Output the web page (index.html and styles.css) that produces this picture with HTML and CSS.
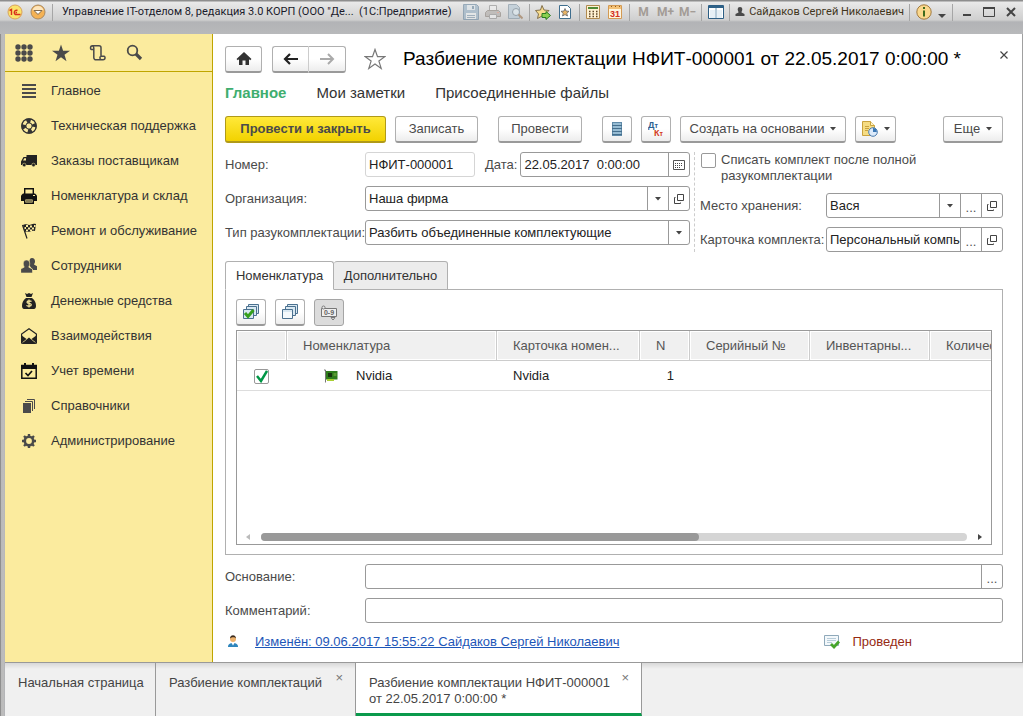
FILE: index.html
```html
<!DOCTYPE html>
<html lang="ru">
<head>
    <meta charset="UTF-8">
    <meta name="viewport" content="width=device-width, initial-scale=1.0">
    <title>Разбиение комплектации</title>
    <link rel="stylesheet" href="styles.css">
</head>
<body>
    <!-- shared icons -->
    <svg class="defs" width="0" height="0" aria-hidden="true">
        <symbol id="open" viewBox="0 0 12 12">
            <path d="M4.500 1.500h6v6h-6zM2.500 4.500h-1v6h6v-1" fill="none" stroke="#444"/>
        </symbol>
        <symbol id="arrow" viewBox="0 0 6 4"><path d="M0 0h6L3 3.500z" fill="#444"/></symbol>
    </svg>

    <header class="titlebar">
        <button class="tool" aria-label="Меню 1С">
            <svg width="16" height="16" viewBox="0 0 16 16"><circle cx="8" cy="8" r="7" fill="#fbe36a" stroke="#d9a35c"/><path d="M2.500 6.500l2-1v5.500M10.500 6.500a2.200 2.200 0 1 0-2 4h5M10 8.500H8.500" fill="none" stroke="#d8301c" stroke-width="1.400"/></svg>
        </button>
        <button class="tool" aria-label="Главное меню">
            <svg width="16" height="16" viewBox="0 0 16 16"><circle cx="8" cy="8" r="7" fill="#f5b254" stroke="#a98a62"/><path d="M2.500 6.500a5.600 5.600 0 0 1 11 0z" fill="#fde6bd"/><path d="M4 6.500h8L8 10.500z" fill="#fff" stroke="#80694c"/></svg>
        </button>
        <span class="sep"></span>
        <span class="title">Управление IT-отделом 8, редакция 3.0 КОРП (ООО "Де...&nbsp; (1С:Предприятие)</span>
        <div class="tools">
            <button class="tool faded" aria-label="Сохранить">
                <svg width="16" height="16" viewBox="0 0 16 16"><path d="M.5.5h13l2 2v13H.5z" fill="#9db4c6" stroke="#7791a6"/><path d="M4 1h8v5H4z" fill="#dde5ea"/><path d="M9 2h2v3H9z" fill="#7791a6"/><path d="M3 9h10v6H3z" fill="#e8eced"/><path d="M4 11.500h8M4 13.500h8" stroke="#8aa0b2"/></svg>
            </button>
            <button class="tool faded" aria-label="Печать">
                <svg width="16" height="16" viewBox="0 0 16 16"><path d="M4.500 1.500h7v5h-7z" fill="#eee" stroke="#999"/><path d="M2.500 6.500h11l2 2v4H.5v-4z" fill="#b6b2ae" stroke="#948d86"/><path d="M4.500 10.500h7v4h-7z" fill="#eee" stroke="#999"/><path d="M12 8h2v1h-2z" fill="#d98"/></svg>
            </button>
            <button class="tool faded" aria-label="Предварительный просмотр">
                <svg width="16" height="16" viewBox="0 0 16 16"><path d="M1.500.5h8l3 3v11h-11z" fill="#b9cad6" stroke="#8a9ba8"/><circle cx="9" cy="8" r="3.500" fill="#dce8ee" stroke="#7a8a96"/><path d="M11.500 10.500l4 4" stroke="#a3805e" stroke-width="2"/></svg>
            </button>
            <span class="sep"></span>
            <button class="tool" aria-label="Добавить в избранное">
                <svg width="16" height="16" viewBox="0 0 16 16"><path d="M7 1.500l2 4.500 5 .5-3.500 3.500 1 4.500L7 12l-4.500 2.500 1-4.500L.5 6.500 5.500 6z" fill="#f8dc8e" stroke="#84714a"/><path d="M7 9.500h4v-2l4.500 4-4.500 4v-2H7z" fill="#8bd04f" stroke="#2b7d22"/></svg>
            </button>
            <button class="tool" aria-label="Избранное">
                <svg width="16" height="16" viewBox="0 0 16 16"><path d="M2.500 1.500h8l3 3v10h-11z" fill="#fff" stroke="#3f6e8e"/><path d="M8 4.500l1 2.500 3 .3-2.200 2 .7 2.700L8 10.600 5.500 12l.7-2.700-2.200-2L7 7z" fill="#e9b465" stroke="#4f5865" stroke-width=".7"/></svg>
            </button>
            <span class="sep"></span>
            <button class="tool" aria-label="Калькулятор">
                <svg width="16" height="16" viewBox="0 0 16 16"><path d="M1.500 1.500h13v13h-13z" fill="#fff1d2" stroke="#b08a50"/><path d="M3 3h10v2H3z" fill="#4f8a35"/><path d="M4 7.500h9M4 10h9M4 12.500h9" stroke="#5d4526" stroke-width="1.400" stroke-dasharray="1.500 2"/></svg>
            </button>
            <button class="tool" aria-label="Календарь">
                <svg width="16" height="16" viewBox="0 0 16 16"><path d="M1.500 1.500h13v13h-13z" fill="#fff6df" stroke="#d39a54"/><path d="M2 2h12v3H2z" fill="#f4c277"/><path d="M4 2.500h1M8 2.500h1M12 2.500h1" stroke="#8c5a20"/><text x="8" y="13" class="cal-num">31</text></svg>
            </button>
            <span class="sep"></span>
            <button class="tool mem">M</button>
            <button class="tool mem">M+</button>
            <button class="tool mem">M−</button>
            <span class="sep"></span>
            <button class="tool" aria-label="Панели">
                <svg width="16" height="16" viewBox="0 0 16 16"><path d="M.5 1.500h15v13H.5z" fill="#fff" stroke="#2d5f85"/><path d="M1 2h14v2H1z" fill="#2f6288"/><path d="M8 4v10" stroke="#6d96b2"/><path d="M2 6h5v8H2zM9 6h5v8H9z" fill="#e6f0f6"/></svg>
            </button>
            <span class="sep"></span>
            <span class="user">
                <svg width="10" height="10" viewBox="0 0 10 10"><path d="M5 0a2.300 2.300 0 0 1 2.300 2.500c0 1.200-.8 1.800-.8 3l3 1.500V9H.5V7l3-1.500c0-1.200-.8-1.800-.8-3A2.300 2.300 0 0 1 5 0z" fill="#4a4a4a"/></svg>
                Сайдаков Сергей Николаевич
            </span>
            <span class="sep"></span>
            <button class="tool" aria-label="Справка">
                <svg width="16" height="16" viewBox="0 0 16 16"><circle cx="8" cy="8" r="7.200" fill="#fbd88c" stroke="#a27a3e"/><path d="M7 3h2v2H7zM7 6.500h2v6H7z" fill="#3f6b1d"/></svg>
            </button>
            <button class="tool narrow" aria-label="Сервис"><svg width="10" height="16" viewBox="0 0 10 16"><path d="M1 10h8l-4 4z" fill="#444"/></svg></button>
            <span class="sep"></span>
            <button class="tool" aria-label="Свернуть"><svg width="12" height="12" viewBox="0 0 12 12"><path d="M2 8h8v2H2z" fill="#444"/></svg></button>
            <button class="tool" aria-label="Развернуть"><svg width="12" height="12" viewBox="0 0 12 12"><path d="M.5 1.500h11v9H.5z" fill="none" stroke="#444"/><path d="M0 1h12v2H0z" fill="#444"/></svg></button>
            <button class="tool" aria-label="Закрыть окно"><svg width="12" height="12" viewBox="0 0 12 12"><path d="M2 2l8 8M10 2l-8 8" stroke="#444" stroke-width="2"/></svg></button>
        </div>
    </header>

    <div class="workspace">
        <aside class="sidebar">
            <div class="side-tools">
                <button aria-label="Разделы"><svg width="18" height="18" viewBox="0 0 18 18"><g fill="#4a4a4a"><circle cx="3" cy="3" r="2.700"/><circle cx="9" cy="3" r="2.700"/><circle cx="15" cy="3" r="2.700"/><circle cx="3" cy="9" r="2.700"/><circle cx="9" cy="9" r="2.700"/><circle cx="15" cy="9" r="2.700"/><circle cx="3" cy="15" r="2.700"/><circle cx="9" cy="15" r="2.700"/><circle cx="15" cy="15" r="2.700"/></g></svg></button>
                <button aria-label="Избранное"><svg width="18" height="18" viewBox="0 0 18 18"><path d="M9 .5l2.100 6.200H18l-5.500 4 2 6.500L9 13.300l-5.500 3.900 2-6.500L0 6.700h6.900z" fill="#4a4a4a"/></svg></button>
                <button aria-label="История"><svg width="18" height="18" viewBox="0 0 18 18"><path d="M4.500 5.500h-2a1.500 1.500 0 0 1-1-1.500c0-1.500 1-2.200 2-2.200h6.500a2 2 0 0 1 2 2v8.500h3a1.200 1.200 0 0 1 1 1.500c0 1.500-.7 2-2 2H7a2.200 2.200 0 0 1-2.200-2.200V4c0-1.200-.5-2-1.500-2.200M12 12.500c-1.500 0-1.500 2.500 0 3" fill="none" stroke="#4a4a4a" stroke-width="1.500"/></svg></button>
                <button aria-label="Поиск"><svg width="18" height="18" viewBox="0 0 18 18"><circle cx="6.500" cy="6.500" r="4.800" fill="none" stroke="#4a4a4a" stroke-width="1.800"/><path d="M10 10l5 5" stroke="#4a4a4a" stroke-width="3.200"/></svg></button>
            </div>
            <nav class="sections">
                <a href="#"><svg width="16" height="16" viewBox="0 0 16 16"><path d="M1 2h14M1 6h14M1 10h14M1 14h14" stroke="#4a4a4a" stroke-width="2"/></svg>Главное</a>
                <a href="#"><svg width="16" height="16" viewBox="0 0 16 16"><circle cx="8" cy="8" r="7.800" fill="#333"/><circle cx="8" cy="8" r="5" fill="none" stroke="#fbeb9e" stroke-width="4" stroke-dasharray="3.900 3.950" stroke-dashoffset="-1"/><circle cx="8" cy="8" r="3" fill="#fbeb9e"/><circle cx="8" cy="8" r="7.200" fill="none" stroke="#333" stroke-width="1.200"/><circle cx="8" cy="8" r="3.200" fill="none" stroke="#333"/></svg>Техническая поддержка</a>
                <a href="#"><svg width="16" height="16" viewBox="0 0 16 16"><path d="M5.500 4V2H16v10H0V8.500L2.500 4z" fill="#222"/><path d="M2 7.500l1.300-2.300H5v2.300z" fill="#fbeb9e"/><circle cx="3.200" cy="12" r="1.800" fill="#222" stroke="#fbeb9e" stroke-width=".5"/><circle cx="12.500" cy="12" r="1.800" fill="#222" stroke="#fbeb9e" stroke-width=".5"/></svg>Заказы поставщикам</a>
                <a href="#"><svg width="16" height="16" viewBox="0 0 16 16"><path d="M3.700 6V.7h8.600V6" fill="none" stroke="#111" stroke-width="1.400"/><path d="M2 5.500h12l2 2V13H0V7.500z" fill="#111"/><path d="M3.700 10.700h8.600v4.600H3.700z" fill="#fbeb9e" stroke="#111" stroke-width="1.400"/><path d="M5 13h6" stroke="#111"/><path d="M12 7.500h2" stroke="#fbeb9e"/></svg>Номенклатура и склад</a>
                <a href="#"><svg width="16" height="16" viewBox="0 0 16 16"><path d="M1.500 2l4.500 13.500" stroke="#222" stroke-width="1.200"/><path d="M2 2c3-2 5 1 8-.5 2-1 3-1 5-.5l-1 7c-2-.5-3-.5-5 .5-2 .8-3-.5-5 .5z" fill="#222"/><path d="M5 2h2v2H5zM9 2.500h2v2H9zM13 2h1.500v2H13zM7 4.500h2v2H7zM3.500 4h1.500v2H3.500zM11 4.500h2v2h-2zM5 6.500h2v1.500H5zM9 6.500h2V8H9z" fill="#fbeb9e"/></svg>Ремонт и обслуживание</a>
                <a href="#"><svg width="16" height="16" viewBox="0 0 16 16"><path d="M11 0c2 0 3 1.500 3 3.500 0 1.500-.7 2-1 3l3 1.800V12h-4L8 7c1-2-.5-7 3-7z" fill="#4a4a4a"/><path d="M5.500 2c2.300 0 3.200 1.500 3.200 3.500S8 8 7.800 9.200L11.500 11v4H-.3v-4l3.500-1.800C3 8 2.300 7.500 2.300 5.500S3.200 2 5.500 2z" fill="#4a4a4a" stroke="#fbeb9e" stroke-width=".6"/></svg>Сотрудники</a>
                <a href="#"><svg width="16" height="16" viewBox="0 0 16 16"><path d="M4 0l2 1 2-1 2 1 2-1-1.500 4h-5zM5 5h6c3 2 4 5 4 8 0 2-1 3-2 3H3c-1 0-2-1-2-3 0-3 1-6 4-8z" fill="#222"/><path d="M10.500 8.500c-1-1-4.500-1-4.500.7s4.300.8 4.300 2.500-3.500 2-4.800.7M8 6.500v8" fill="none" stroke="#fbeb9e" stroke-width="1.200"/></svg>Денежные средства</a>
                <a href="#"><svg width="16" height="16" viewBox="0 0 16 16"><path d="M.6 15V6L8 .8 15.400 6v9z" fill="#fbeb9e" stroke="#222" stroke-width="1.200"/><path d="M0 7l5.500 4L0 15.500zM16 7l-5.500 4 5.500 4.500zM.5 16L8 9.500l7.500 6.500z" fill="#222"/></svg>Взаимодействия</a>
                <a href="#"><svg width="16" height="16" viewBox="0 0 16 16"><path d="M.8 2.500h14.400v12.700H.8z" fill="none" stroke="#111" stroke-width="1.500"/><path d="M0 2h3V0h2v2h6V0h2v2h3v4H0z" fill="#111"/><path d="M4.500 10l2.500 2.500L11 8" fill="none" stroke="#111" stroke-width="1.700"/></svg>Учет времени</a>
                <a href="#"><svg width="16" height="16" viewBox="0 0 16 16"><path d="M2 5h8v10H2z" fill="#4a4a4a"/><path d="M4 3.500h7.500V13M6 1.500h7.500V11" fill="none" stroke="#4a4a4a"/></svg>Справочники</a>
                <a href="#"><svg width="16" height="16" viewBox="0 0 16 16"><circle cx="8" cy="8" r="4.200" fill="none" stroke="#4a4a4a" stroke-width="2.600"/><path d="M8 1v2.500M8 12.500V15M1 8h2.500M12.500 8H15M3 3l2 2M11 11l2 2M13 3l-2 2M5 11l-2 2" stroke="#4a4a4a" stroke-width="2.400"/></svg>Администрирование</a>
            </nav>
        </aside>

        <main class="form">
            <div class="heading">
                <button class="btn home" aria-label="Начальная страница"><svg width="16" height="14" viewBox="0 0 16 14"><path d="M8 0l7.500 7-1.300 1.300L13 7.200V13H9.500V8.500h-3V13H3V7.200L1.800 8.300.5 7z" fill="#333"/></svg></button>
                <div class="history">
                    <button class="btn" aria-label="Назад"><svg width="16" height="12" viewBox="0 0 16 12"><path d="M15 6H3M7 1L2 6l5 5" fill="none" stroke="#222" stroke-width="2.200"/></svg></button>
                    <button class="btn" aria-label="Вперед"><svg width="16" height="12" viewBox="0 0 16 12"><path d="M1 6h12M9 1l5 5-5 5" fill="none" stroke="#aaa" stroke-width="2"/></svg></button>
                </div>
                <button class="star" aria-label="В избранное"><svg width="22" height="22" viewBox="0 0 22 22"><path d="M11 1.500l2.500 7.200h7.300l-5.900 4.400 2.300 7.300L11 16l-6.200 4.400 2.300-7.300L1.200 8.700h7.300z" fill="#fff" stroke="#777" stroke-width="1.200"/></svg></button>
                <h1>Разбиение комплектации НФИТ-000001 от 22.05.2017 0:00:00 *</h1>
                <button class="close" aria-label="Закрыть"><svg width="8" height="8" viewBox="0 0 8 8"><path d="M.5.500l7 7M7.500.500l-7 7" stroke="#444" stroke-width="1.200"/></svg></button>
            </div>

            <nav class="subnav">
                <a href="#" class="current">Главное</a>
                <a href="#">Мои заметки</a>
                <a href="#">Присоединенные файлы</a>
            </nav>

            <div class="commands">
                <button class="btn primary">Провести и закрыть</button>
                <button class="btn save">Записать</button>
                <button class="btn post">Провести</button>
                <button class="btn small" aria-label="Движения документа"><svg width="12" height="14" viewBox="0 0 12 14"><path d="M1 0h10v14H1z" fill="#5f8aa8"/><path d="M2 2h8M2 5h8M2 8h8M2 11h8" stroke="#a9cbe0" stroke-width="1.400"/><path d="M1 3.500h10M1 6.500h10M1 9.500h10M1 12.500h10" stroke="#3f6887" stroke-width=".8"/></svg></button>
                <button class="btn small" aria-label="Дебет и кредит"><svg width="16" height="16" viewBox="0 0 16 16"><text x="0" y="7" class="dt">Д<tspan class="sub">т</tspan></text><text x="6" y="15" class="kt">К<tspan class="sub">т</tspan></text></svg></button>
                <button class="btn based">Создать на основании <svg width="6" height="4"><use href="#arrow"/></svg></button>
                <button class="btn reports" aria-label="Отчеты"><svg width="16" height="16" viewBox="0 0 16 16"><path d="M.5.500h8l4 4v10H.5z" fill="#f5dc83" stroke="#c9a23e"/><path d="M8.500.5v4h4" fill="#fff3c4" stroke="#c9a23e"/><path d="M3 5.500h4M3 7.500h4M3 9.500h3" stroke="#c9a23e"/><circle cx="11" cy="11" r="4.300" fill="#dceafa" stroke="#4b7caf"/><path d="M11 11V7a4 4 0 0 1 3.800 4z" fill="#3c78b5"/></svg><svg width="6" height="4"><use href="#arrow"/></svg></button>
                <button class="btn more">Еще <svg width="6" height="4"><use href="#arrow"/></svg></button>
            </div>

            <div class="fields">
                <div class="col">
                    <div class="row">
                        <label class="wide" for="number">Номер:</label>
                        <div class="box muted number"><input id="number" value="НФИТ-000001"></div>
                        <label class="date-label" for="date">Дата:</label>
                        <div class="box grow"><input id="date" value="22.05.2017&nbsp; 0:00:00"><button aria-label="Выбрать дату"><svg width="12" height="11" viewBox="0 0 12 11"><path d="M.5 1.500h11v9H.5z" fill="none" stroke="#555"/><path d="M2 4.500h8M2 6.500h8M2 8.500h6" stroke="#444" stroke-dasharray="1 1"/></svg></button></div>
                    </div>
                    <div class="row">
                        <label class="wide" for="org">Организация:</label>
                        <div class="box grow"><input id="org" value="Наша фирма"><button aria-label="Список"><svg width="6" height="4"><use href="#arrow"/></svg></button><button aria-label="Открыть"><svg width="12" height="12"><use href="#open"/></svg></button></div>
                    </div>
                    <div class="row">
                        <label class="wide" for="kind">Тип разукомплектации:</label>
                        <div class="box grow"><select id="kind"><option>Разбить объединенные комплектующие</option></select><span class="drop"><svg width="6" height="4"><use href="#arrow"/></svg></span></div>
                    </div>
                </div>
                <div class="col side">
                    <label class="check"><input type="checkbox"><span>Списать комплект после полной разукомплектации</span></label>
                    <div class="row">
                        <label class="mid" for="place">Место хранения:</label>
                        <div class="box grow"><input id="place" value="Вася"><button aria-label="Список"><svg width="6" height="4"><use href="#arrow"/></svg></button><button class="dots">...</button><button aria-label="Открыть"><svg width="12" height="12"><use href="#open"/></svg></button></div>
                    </div>
                    <div class="row">
                        <label class="mid" for="card">Карточка комплекта:</label>
                        <div class="box grow"><input id="card" value="Персональный компьютер"><button class="dots">...</button><button aria-label="Открыть"><svg width="12" height="12"><use href="#open"/></svg></button></div>
                    </div>
                </div>
            </div>

            <div class="tabs">
                <button class="active">Номенклатура</button>
                <button>Дополнительно</button>
            </div>
            <section class="panel">
                <div class="panel-tools">
                    <button class="btn small" aria-label="Отметить все"><svg width="16" height="16" viewBox="0 0 16 16"><g fill="#d9e8f2" stroke="#4b7190"><path d="M5.500.500h10v9h-10z"/><path d="M3.500 2.500h10v9h-10z"/><path d="M.500 5.500h10v9H.500z"/></g><path d="M2 9l3 3.500L10.500 6" fill="none" stroke="#35a01d" stroke-width="3"/></svg></button>
                    <button class="btn small" aria-label="Снять отметки"><svg width="16" height="16" viewBox="0 0 16 16"><g fill="#d9e8f2" stroke="#4b7190"><path d="M5.500.500h10v9h-10z"/><path d="M3.500 2.500h10v9h-10z"/><path d="M.500 5.500h10v9H.500z"/></g><path d="M1 8h9v6H1z" fill="#f4f9fc"/></svg></button>
                    <button class="btn small pressed" aria-label="Серийные номера"><svg width="18" height="16" viewBox="0 0 18 16"><path d="M1.500 3.500h15v8h-15z" fill="#eee" stroke="#777"/><circle cx="3.500" cy="2.500" r="1.500" fill="#eee" stroke="#777"/><path d="M11 12.500h4l-2 2.500z" fill="#eee" stroke="#777"/><text x="9" y="10" class="digits">0-9</text></svg></button>
                </div>
                <div class="list">
                    <table>
                        <colgroup><col class="c-mark"><col class="c-item"><col class="c-card"><col class="c-n"><col class="c-serial"><col class="c-serial"><col class="c-serial"></colgroup>
                        <thead>
                            <tr><th></th><th>Номенклатура</th><th>Карточка номен...</th><th>N</th><th>Серийный №</th><th>Инвентарны...</th><th>Количество</th></tr>
                        </thead>
                        <tbody>
                            <tr>
                                <td class="mark"><input type="checkbox" class="row-check" aria-label="Отметка" checked></td>
                                <td><span class="item"><svg width="14" height="14" viewBox="0 0 14 14"><path d="M0 1h1.500v12.500" fill="none" stroke="#777"/><path d="M2 2h11.500v8.500H2z" fill="#2f7d1c"/><path d="M4 4h4v4H4z" fill="#17340f"/><path d="M9.500 4h3v3h-3z" fill="#5a9b32"/><path d="M3 10h7v2H3z" fill="#a8cf32"/></svg>Nvidia</span></td>
                                <td>Nvidia</td>
                                <td class="num">1</td>
                                <td></td><td></td><td></td>
                            </tr>
                        </tbody>
                    </table>
                    <div class="scroll">
                        <svg width="4" height="6" viewBox="0 0 4 6"><path d="M4 0v6L0 3z" fill="#bbb"/></svg>
                        <div class="track"><div class="thumb"></div></div>
                        <svg width="4" height="6" viewBox="0 0 4 6"><path d="M0 0v6l4-3z" fill="#444"/></svg>
                    </div>
                </div>
            </section>

            <div class="row basis">
                <label class="wide" for="basis">Основание:</label>
                <div class="box grow"><input id="basis"><button class="dots">...</button></div>
            </div>
            <div class="row">
                <label class="wide" for="comment">Комментарий:</label>
                <div class="box grow"><input id="comment"></div>
            </div>
            <div class="status">
                <svg width="16" height="16" viewBox="0 0 16 16"><path d="M3 13c0-3 2-4 5-4s5 1 5 4z" fill="#2f86bd"/><path d="M6.500 9L8 11.500 9.500 9z" fill="#fff"/><circle cx="8" cy="5" r="3" fill="#eeb26c"/><path d="M5 4.500C5 0 11 0 11 4.500 10 3 7 2.500 5 4.500z" fill="#3a2b1e"/></svg>
                <a href="#">Изменён: 09.06.2017 15:55:22 Сайдаков Сергей Николаевич</a>
                <span class="posted"><svg width="16" height="14" viewBox="0 0 16 14"><path d="M.500.500h14v10H.500z" fill="#f3f8fb" stroke="#8fa9ba"/><path d="M3 3.500h9M3 5.500h9M3 7.500h5" stroke="#b7ccd9"/><path d="M7 9l3 3 5-5.500" fill="none" stroke="#46a52a" stroke-width="2.800"/></svg>Проведен</span>
            </div>
        </main>
    </div>

    <footer class="windows">
        <a href="#" class="w-home">Начальная страница</a>
        <a href="#" class="w-list">Разбиение комплектаций <span class="x">×</span></a>
        <a href="#" class="w-doc active">Разбиение комплектации НФИТ-000001 от 22.05.2017 0:00:00 * <span class="x">×</span></a>
    </footer>
</body>
</html>
```
FILE: styles.css
```css
* {
    box-sizing: border-box;
}
body {
    margin: 0;
    height: 100vh;
    display: flex;
    flex-direction: column;
    padding-left: 4px;
    background: linear-gradient(90deg, #8f8f8f 1px, #b9b9b9 1px, #bdbdbd 4px, #b4b5b8 4px);
    font-family: "Liberation Sans", Arial, sans-serif;
    font-size: 13px;
    line-height: 16px;
    color: #4a4a4a;
    overflow: hidden;
}
button, input, select {
    font: inherit;
    color: inherit;
}
button {
    padding: 0;
    border: none;
    background: none;
    cursor: pointer;
}
svg {
    flex: none;
    display: block;
}
.defs {
    position: absolute;
}

/* title bar */
.titlebar {
    display: flex;
    align-items: center;
    gap: 6px;
    height: 34px;
    margin-left: -4px;
    padding: 3px 4px 13px 6px;
    background: linear-gradient(#8e8e8e 1px, #e9e9e9 2px, #cfcfcf 20px, #b2b3b6 22px, #b8b9bb);
    font-family: Roboto, "Open Sans", sans-serif;
    font-size: 11px;
    color: #222;
    white-space: nowrap;
}
.title {
    flex: 1;
    padding-left: 3px;
    color: #1a1a2a;
}
.tools {
    display: flex;
    align-items: center;
    gap: 5px;
}
.tool {
    min-width: 17px;
}
.tool svg {
    margin: 0 auto;
}
.narrow {
    min-width: 10px;
}
.faded {
    opacity: 0.7;
}
.mem {
    font-size: 12px;
    font-weight: bold;
    color: #a39c96;
}
.sep {
    width: 1px;
    height: 17px;
    background: #a6a6a6;
}
.user {
    display: flex;
    align-items: center;
    gap: 4px;
    color: #41351c;
}
.cal-num {
    font: bold 9px "Liberation Sans", sans-serif;
    text-anchor: middle;
    fill: #d3301c;
}

/* sections */
.workspace {
    flex: 1;
    min-height: 0;
    display: flex;
    border-left: 1px solid #b9b9b9;
}
.sidebar {
    width: 208px;
    flex: none;
    background: #fbeb9e;
    border-right: 1px solid #bfa500;
}
.side-tools {
    display: flex;
    gap: 19px;
    height: 38px;
    padding-left: 10px;
    border-bottom: 1px solid #bfa500;
}
.sections {
    padding-top: 1px;
}
.sections a {
    display: flex;
    align-items: center;
    gap: 14px;
    height: 35px;
    padding-left: 16px;
    color: #333;
    text-decoration: none;
    white-space: nowrap;
}

/* document form */
.form {
    flex: 1;
    min-width: 0;
    display: flex;
    flex-direction: column;
    padding: 12px 19px 11px 12px;
    background: #fff;
    border-right: 1px solid #a0a0a0;
}
.heading {
    display: flex;
    align-items: center;
    height: 26px;
    margin-right: -5px;
}
.heading h1 {
    flex: 1;
    margin: 0;
    font-size: 19px;
    line-height: 26px;
    font-weight: normal;
    color: #000;
    white-space: nowrap;
}
.btn {
    display: flex;
    align-items: center;
    justify-content: center;
    gap: 6px;
    height: 27px;
    border: 1px solid #b0b0b0;
    border-bottom: 2px solid #9a9a9a;
    border-radius: 3px;
    background: linear-gradient(#fff 50%, #ededed);
    white-space: nowrap;
}
.home {
    width: 37px;
}
.history {
    display: flex;
    margin: 0 18px 0 10px;
}
.history .btn {
    width: 37px;
}
.history .btn:first-child {
    border-right-color: #ccc;
    border-radius: 3px 0 0 3px;
}
.history .btn:last-child {
    border-left: none;
    border-radius: 0 3px 3px 0;
}
.star {
    margin-right: 17px;
}
.close {
    padding: 0 0 8px 8px;
}
.subnav {
    display: flex;
    gap: 30px;
    margin: 11px 0 13px;
    font-size: 15px;
    line-height: 20px;
}
.subnav a {
    color: #333;
    text-decoration: none;
}
.subnav .current {
    font-weight: bold;
    color: #3fae6f;
}
.commands {
    display: flex;
    gap: 9px;
    margin-bottom: 9px;
}
.primary {
    width: 161px;
    background: linear-gradient(#ffe93a, #f2d200);
    border-color: #b09a18;
    font-weight: bold;
}
.save {
    width: 83px;
}
.post {
    width: 84px;
    margin: 0 11px;
}
.small {
    width: 30px;
}
.based {
    width: 166px;
}
.reports {
    width: 41px;
}
.more {
    width: 60px;
    margin-left: auto;
}
.dt, .kt {
    font: bold 9px "Liberation Sans", sans-serif;
    fill: #2d6090;
}
.kt {
    fill: #d33a22;
}
.sub {
    font-size: 7px;
}
.fields {
    display: flex;
    gap: 4px;
    margin-bottom: 9px;
}
.col {
    flex: 1;
    min-width: 0;
    display: flex;
    flex-direction: column;
    gap: 9px;
}
.col.side {
    flex: none;
    width: 309px;
    padding-left: 5px;
    border-left: 1px dashed #ccc;
}
.row {
    display: flex;
    align-items: center;
    white-space: nowrap;
}
.wide {
    width: 140px;
    flex: none;
}
.mid {
    width: 126px;
    flex: none;
}
.date-label {
    margin: 0 3px 0 10px;
}
.box {
    display: flex;
    min-width: 0;
    height: 25px;
    border: 1px solid #999;
    border-radius: 3px;
    background: #fff;
    color: #222;
}
.box input, .box select {
    flex: 1;
    min-width: 0;
    width: 0;
    padding: 0 0 0 3px;
    border: none;
    background: none;
    outline: none;
    appearance: none;
}
.box button, .drop {
    display: flex;
    align-items: center;
    justify-content: center;
    width: 21px;
    border-left: 1px solid #999;
}
.box .dots {
    align-items: flex-end;
    padding-bottom: 1px;
    color: #555;
}
.muted {
    border-color: #d5d5d5;
}
.number {
    width: 110px;
}
.grow {
    flex: 1;
}
.check {
    display: flex;
    gap: 5px;
    height: 32px;
}
.check input, .row-check {
    appearance: none;
    flex: none;
    width: 15px;
    height: 15px;
    margin: 1px 0 0 1px;
    border: 1px solid #999;
    border-radius: 2px;
    background: #fff;
}

/* tabs and table */
.tabs {
    display: flex;
    height: 29px;
    margin-bottom: -1px;
    position: relative;
}
.tabs button {
    width: 114px;
    border: 1px solid #b0b0b0;
    border-left: none;
    border-radius: 3px 3px 0 0;
    background: #ececec;
    color: #333;
}
.tabs .active {
    width: 109px;
    border-left: 1px solid #b0b0b0;
    border-bottom-color: #fff;
    background: #fff;
}
.panel {
    flex: 1;
    min-height: 0;
    display: flex;
    flex-direction: column;
    padding: 9px 10px;
    border: 1px solid #b0b0b0;
}
.panel-tools {
    display: flex;
    gap: 9px;
    margin-bottom: 4px;
}
.pressed {
    background: #dcdcdc;
    border: 1px solid #a5a5a5;
}
.digits {
    font: bold 7px "Liberation Sans", sans-serif;
    text-anchor: middle;
    fill: #666;
}
.list {
    flex: 1;
    min-height: 0;
    display: flex;
    flex-direction: column;
    justify-content: space-between;
    overflow: hidden;
    border: 1px solid #999;
}
table {
    width: 813px;
    table-layout: fixed;
    border-collapse: separate;
    border-spacing: 0;
}
.c-mark, .c-n {
    width: 50px;
}
.c-item {
    width: 210px;
}
.c-card {
    width: 143px;
}
.c-serial {
    width: 120px;
}
th, td {
    height: 30px;
    padding: 0 0 0 16px;
    border-bottom: 1px solid #ddd;
    text-align: left;
    font-weight: normal;
    white-space: nowrap;
}
th {
    border-right: 1px solid #ccc;
    border-bottom-color: #ccc;
    background: #f0f0f0;
    color: #555;
    box-shadow: inset 0 0 0 1px #fff;
}
td {
    color: #222;
}
.mark {
    line-height: 0;
}
.row-check {
    background: no-repeat center url("data:image/svg+xml,%3Csvg xmlns='http://www.w3.org/2000/svg' width='13' height='13'%3E%3Cpath d='M2 6l4 5 6-10' fill='none' stroke='%23009646' stroke-width='2.500'/%3E%3C/svg%3E");
}
.item {
    display: flex;
    align-items: center;
    gap: 18px;
    padding-left: 21px;
}
.num {
    padding-right: 16px;
    text-align: right;
}
.scroll {
    display: flex;
    align-items: center;
    gap: 11px;
    padding: 0 9px 3px;
}
.track {
    flex: 1;
    height: 8px;
    border-radius: 4px;
    background: #d5d5d5;
}
.thumb {
    width: 62%;
    height: 8px;
    border-radius: 4px;
    background: #999;
}

/* bottom of the form */
.basis {
    margin: 9px 0;
}
.status {
    display: flex;
    align-items: center;
    height: 18px;
    margin-top: 10px;
}
.status a {
    margin-left: 14px;
    color: #1d56b8;
}
.posted {
    display: flex;
    align-items: center;
    gap: 12px;
    margin-left: auto;
    margin-right: 91px;
    color: #962a12;
}

/* open windows */
.windows {
    display: flex;
    height: 54px;
    margin-left: 1px;
    border-top: 1px solid #999;
    background: linear-gradient(#d8d8d8, #f0f0f0 6px);
}
.windows a {
    display: flex;
    justify-content: space-between;
    padding: 12px 12px 0 13px;
    border-right: 1px solid #999;
    color: #444;
    text-decoration: none;
}
.windows .w-home {
    width: 151px;
    white-space: nowrap;
}
.w-list {
    width: 200px;
}
.w-doc {
    width: 286px;
}
.windows .active {
    background: #fff;
    border-bottom: 3px solid #0a9a4c;
}
.x {
    line-height: 6px;
    color: #777;
}
```
